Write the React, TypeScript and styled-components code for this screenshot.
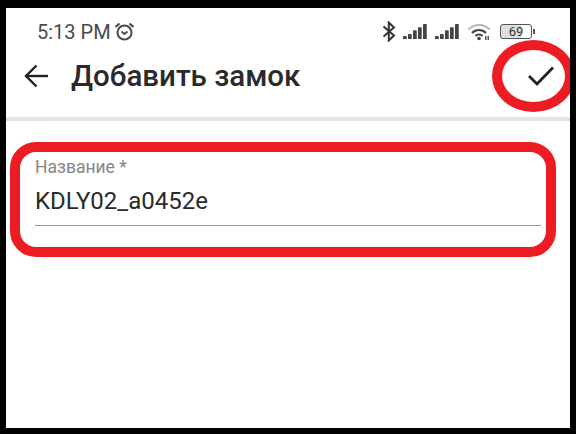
import styled, { createGlobalStyle } from 'styled-components'

const GlobalStyle = createGlobalStyle`
	html, body {
		margin: 0;
		padding: 0;
		background: #000;
	}
	* {
		box-sizing: border-box;
	}
`

const SIGNAL_BARS = [
	{ x: 0, y: 9.5, h: 2.5 },
	{ x: 4, y: 8, h: 4 },
	{ x: 8, y: 5, h: 7 },
	{ x: 12, y: 2.5, h: 9.5 },
	{ x: 16, y: 0, h: 12 }
]

const AlarmIcon = () => (
	<svg width="21" height="21" viewBox="0 0 21 21" fill="none" stroke="#4a4a4a" strokeWidth="2">
		<circle cx="10.5" cy="11.5" r="7" />
		<path d="M7.5 10.5 L10.5 13 L13.5 10.5" strokeWidth="1.8" />
		<path d="M1.5 6 L5.5 2.5" strokeWidth="2.2" />
		<path d="M19.5 6 L15.5 2.5" strokeWidth="2.2" />
	</svg>
)

const BluetoothIcon = () => (
	<svg width="14" height="21" viewBox="0 0 14 21" fill="none" stroke="#333" strokeWidth="2">
		<path d="M1.5 5.5 L12 14.5 L6.8 19.5 V1.5 L12 6.5 L1.5 15.5" />
	</svg>
)

const SignalIcon = () => (
	<svg width="25" height="15" viewBox="0 0 20 12" fill="#444">
		{SIGNAL_BARS.map((bar) => (
			<rect key={bar.x} x={bar.x} y={bar.y} width="3" height={bar.h} rx="0.5" />
		))}
	</svg>
)

const WifiIcon = () => (
	<svg width="24" height="18" viewBox="0 0 24 18" fill="none">
		<path d="M1.5 6.5 C7.5 0.5 16.5 0.5 22.5 6.5" stroke="#b5b5b5" strokeWidth="2.2" />
		<path d="M5 10 C9 6 15 6 19 10" stroke="#444" strokeWidth="2.2" />
		<path d="M8.5 13 C10.5 11.2 13.5 11.2 15.5 13" stroke="#444" strokeWidth="2.2" />
		<circle cx="12" cy="15.5" r="1.8" fill="#444" />
		<rect x="18" y="13" width="1.5" height="4" fill="#555" />
		<rect x="20.5" y="13" width="1.5" height="4" fill="#555" />
	</svg>
)

const BackIcon = () => (
	<svg width="24" height="24" viewBox="0 0 24 24" fill="none" stroke="#222" strokeWidth="2.4">
		<path d="M24 12 H2.5" />
		<path d="M12.5 1.5 L2 12 L12.5 22.5" />
	</svg>
)

const CheckIcon = () => (
	<svg width="26" height="20" viewBox="0 0 26 20" fill="none" stroke="#222" strokeWidth="2.8">
		<path d="M1 10 L9 18 L25 1.5" />
	</svg>
)

const App = () => {
	return (
		<>
			<GlobalStyle />
			<Frame>
				<Screen>
					<StatusBar>
						<StatusLeft>
							<Clock>5:13 PM</Clock>
							<AlarmIcon />
						</StatusLeft>
						<StatusRight>
							<BluetoothIcon />
							<SignalIcon />
							<SignalIcon />
							<WifiIcon />
							<Battery>
								<BatteryBody>69</BatteryBody>
								<BatteryTip />
							</Battery>
						</StatusRight>
					</StatusBar>
					<AppBar>
						<BackButton>
							<BackIcon />
						</BackButton>
						<Title>Добавить замок</Title>
						<ConfirmButton>
							<CheckIcon />
						</ConfirmButton>
						<ConfirmRing />
					</AppBar>
					<Divider />
					<Highlight>
						<Field>
							<FieldLabel>Название *</FieldLabel>
							<FieldValue>KDLY02_a0452e</FieldValue>
						</Field>
					</Highlight>
				</Screen>
			</Frame>
		</>
	)
}

export default App

const Frame = styled.div`
	width: 576px;
	height: 434px;
	padding: 8px 6px 6px;
	background: #000;
`
const Screen = styled.div`
	position: relative;
	width: 100%;
	height: 100%;
	overflow: hidden;
	background: #fff;
	font-family: Roboto, 'Liberation Sans', sans-serif;
`
const StatusBar = styled.div`
	display: flex;
	align-items: center;
	justify-content: space-between;
	height: 47px;
	padding: 0 35px 0 31px;
`
const StatusLeft = styled.div`
	display: flex;
	align-items: center;
	gap: 3px;
`
const Clock = styled.span`
	font-size: 20px;
	color: #4a4a4a;
`
const StatusRight = styled.div`
	display: flex;
	align-items: center;
	gap: 7px;
`
const Battery = styled.div`
	display: flex;
	align-items: center;
	gap: 1px;
	margin-left: 2px;
`
const BatteryBody = styled.div`
	display: flex;
	align-items: center;
	justify-content: center;
	width: 32px;
	height: 15px;
	border: 1px solid #555;
	border-radius: 3px;
	background: linear-gradient(90deg, #ddd 0 68%, #fff 68%);
	font-size: 13px;
	color: #333;
`
const BatteryTip = styled.div`
	width: 2px;
	height: 5px;
	background: #555;
`
const AppBar = styled.div`
	position: relative;
	display: flex;
	align-items: center;
	height: 62px;
	padding: 0 16px 20px 18px;
`
const BackButton = styled.div`
	display: flex;
	width: 47px;
`
const Title = styled.h1`
	flex: 1;
	margin: 0;
	font-size: 29.5px;
	font-weight: 500;
	color: #2a2a2a;
`
const ConfirmButton = styled.div`
	display: flex;
`
const ConfirmRing = styled.div`
	position: absolute;
	top: -15px;
	left: 486px;
	width: 83px;
	height: 72px;
	border: 10px solid #ed1c24;
	border-radius: 50%;
`
const Divider = styled.div`
	height: 4px;
	background: #e3e3e3;
`
const Highlight = styled.div`
	width: 546px;
	height: 115px;
	margin: 21px 0 0 4px;
	padding: 5px 5px 0 15px;
	border: 10px solid #ed1c24;
	border-radius: 26px;
`
const Field = styled.div`
	display: flex;
	flex-direction: column;
	height: 69px;
	border-bottom: 1px solid #999;
`
const FieldLabel = styled.label`
	font-size: 17.5px;
	line-height: 20px;
	color: #858585;
`
const FieldValue = styled.div`
	margin-top: 10px;
	font-size: 24px;
	line-height: 28px;
	color: #2a2a2a;
`
